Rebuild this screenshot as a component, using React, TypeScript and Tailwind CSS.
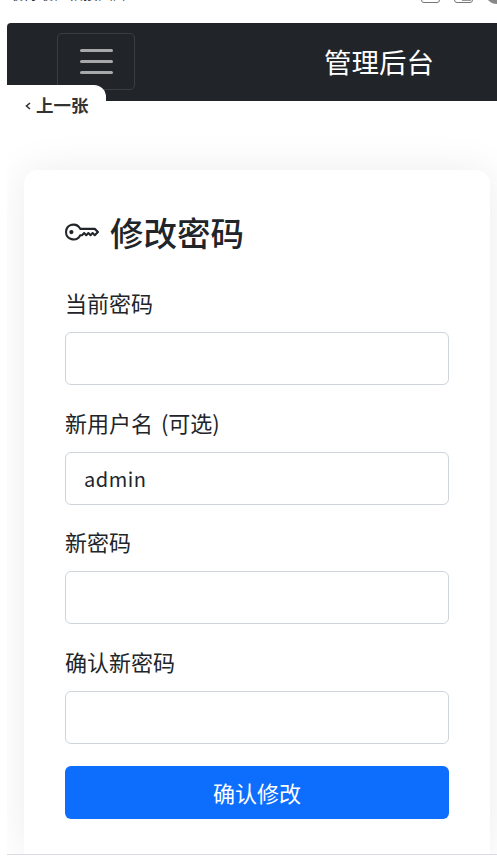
import { BsKey } from 'react-icons/bs';

const cjk = "font-['Noto_Sans_CJK_SC','Noto_Sans',sans-serif]";

const fields = [
  { label: '当前密码', value: '' },
  { label: '新用户名 (可选)', value: 'admin' },
  { label: '新密码', value: '' },
  { label: '确认新密码', value: '' },
];

export default function App() {
  return (
    <div className={`relative h-[859px] w-[497px] overflow-hidden bg-white text-[#212529] ${cjk}`}>
      {/* clipped capture chrome */}
      <div className="flex h-[23px] items-start overflow-hidden pl-[8px]">
        <span className="-mt-[17px] text-[15px] leading-[20px] text-[#333]">最得最佳相接图片</span>
        <div className="ml-auto -mt-[13px] mr-[2px] flex items-start">
          <div className="h-[16px] w-[19px] rounded-[3px] border border-[#777]" />
          <div className="ml-[14px] flex h-[16px] w-[19px] items-end justify-end rounded-[3px] border border-[#777] p-[1px]">
            <div className="h-[3px] w-[9px] bg-[#999]" />
          </div>
          <div className="ml-[12px] -mr-[14px] -mt-[7px] h-[24px] w-[24px] rounded-full bg-[#888]" />
        </div>
      </div>

      <div className="ml-[7px] flex h-[832px] flex-col overflow-hidden border-b border-[#d9dce0] bg-white">
        <header className="flex h-[78px] shrink-0 items-center rounded-tl-[4px] bg-[#212529] pb-[1px]">
          <button className="ml-[50px] flex h-[57px] w-[78px] items-center justify-center rounded-[5px] border border-[#3a3e43]">
            <span className="flex w-[33px] flex-col gap-[8px]">
              <span className="h-[3px] rounded bg-[#a6a8aa]" />
              <span className="h-[3px] rounded bg-[#a6a8aa]" />
              <span className="h-[3px] rounded bg-[#a6a8aa]" />
            </span>
          </button>
          <span className="ml-[189px] text-[27.5px] leading-none text-white">管理后台</span>
        </header>

        <main className="ml-[17px] mr-[7px] mt-[69px] flex-1 rounded-t-[14px] bg-white px-[41px] pt-[40px] shadow-[0_0_40px_rgba(0,0,0,0.08)]">
          <h1 className="flex h-[44px] items-center gap-[11px] text-[33.5px] leading-none font-medium">
            <BsKey size={34} className="shrink-0" />
            修改密码
          </h1>
          <form className="mt-[31px]">
            {fields.map((f) => (
              <div key={f.label} className="mb-[19.7px]">
                <label className="block h-[47px] text-[22px] leading-[34px] [word-spacing:3px]">{f.label}</label>
                <input
                  readOnly
                  value={f.value}
                  className={`block h-[53px] w-[384px] rounded-[6px] border border-[#ced4da] bg-white px-[18px] text-[20px] tracking-[0.5px] text-[#212529] outline-none ${cjk}`}
                />
              </div>
            ))}
            <button type="button" className="mt-[22px] flex h-[53px] w-[384px] items-center justify-center rounded-[6px] bg-[#0d6efd] text-[22px] text-white">
              确认修改
            </button>
          </form>
        </main>
      </div>

      {/* screenshot "previous" tab lying over the header */}
      <div className="absolute left-[7px] top-[85px] flex h-[41px] w-[99px] items-center rounded-tr-[12px] bg-white pl-[18px] text-[17.5px] font-bold text-[#333]">
        <svg width="6" height="8" viewBox="0 0 6 8" fill="none" stroke="#333" strokeWidth="1.6" className="mr-[5px] shrink-0">
          <path d="M5 1 L1.5 4 L5 7" />
        </svg>
        上一张
      </div>
    </div>
  );
}
